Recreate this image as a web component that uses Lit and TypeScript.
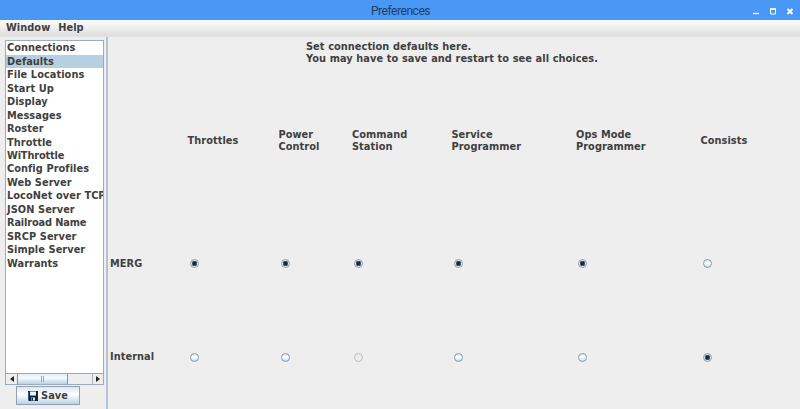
import { LitElement, html, css } from "lit";
import { customElement, property } from "lit/decorators.js";
import { classMap } from "lit/directives/class-map.js";

@customElement("radio-dot")
class RadioDot extends LitElement {
  @property() state = "off";

  static styles = css`
    :host { display: block; width: 9px; height: 9px; }
    svg { display: block; }
    .ring { fill: url(#g); stroke: #8499ad; }
    .on .ring { fill: #d3dfe7; stroke: #95a5b2; }
    .disabled .ring { fill: #eeeeee; stroke: #bcbcbc; }
    .dot { fill: #20272d; }
  `;

  render() {
    return html`<svg class=${this.state} width="9" height="9" viewBox="0 0 9 9">
      <defs>
        <linearGradient id="g" x1="0" y1="0" x2="0" y2="1">
          <stop offset="0" stop-color="#d5e3ee" />
          <stop offset=".45" stop-color="#ffffff" />
          <stop offset="1" stop-color="#c3d9ea" />
        </linearGradient>
      </defs>
      <circle class="ring" cx="4.5" cy="4.5" r="4" />
      ${this.state === "on"
        ? html`<svg viewBox="0 0 9 9"><rect class="dot" x="2.3" y="2.3" width="4.4" height="4.4" rx="1" /></svg>`
        : ""}
    </svg>`;
  }
}

const SECTIONS = [
  "Connections", "Defaults", "File Locations", "Start Up", "Display", "Messages",
  "Roster", "Throttle", "WiThrottle", "Config Profiles", "Web Server",
  "LocoNet over TCP", "JSON Server", "Railroad Name", "SRCP Server",
  "Simple Server", "Warrants",
];

const COLUMNS = [
  ["Throttles"], ["Power", "Control"], ["Command", "Station"],
  ["Service", "Programmer"], ["Ops Mode", "Programmer"], ["Consists"],
];

const ROWS = [
  { name: "MERG", states: ["on", "on", "on", "on", "on", "off"] },
  { name: "Internal", states: ["off", "off", "disabled", "off", "off", "on"] },
];

@customElement("app-root")
class AppRoot extends LitElement {
  static styles = css`
    * { box-sizing: border-box; }
    :host {
      display: flex; flex-direction: column; width: 800px; height: 409px;
      overflow: hidden; background: #eeeeee; color: #404040;
      font: bold 9.8px/12px "DejaVu Sans", sans-serif; white-space: nowrap;
      letter-spacing: 0.05px; word-spacing: 0.15px;
    }
    .title {
      flex: none; display: grid; grid-template-columns: 1fr auto 1fr; align-items: center;
      height: 20px; padding: 0 6px 0 7px; background: #4a98f5; color: #213e64;
      font: 12px/20px Roboto, sans-serif; letter-spacing: -0.45px;
    }
    .title span { grid-column: 2; padding-top: 1px; }
    .controls { justify-self: end; display: flex; }
    .controls svg { display: block; }
    .menu {
      flex: none; display: flex; gap: 8px; height: 17px; padding: 1px 6px 0;
      line-height: 14px; border-bottom: 1px solid #e2e2e2;
      background: linear-gradient(#fcfcfc, #dededc);
    }
    .body { flex: 1; display: flex; min-height: 0; }
    .side {
      flex: none; width: 108px; padding: 3px 0 0 5px; border-right: 2px solid #b5c1d6;
      display: flex; flex-direction: column;
    }
    .box {
      width: 99px; height: 345px; border: 1px solid #9fabb8; background: #fff;
      display: flex; flex-direction: column;
    }
    .list { flex: 1; overflow: hidden; padding-top: 0.4px; }
    .item { height: 13.46px; line-height: 14px; padding-left: 1px; }
    .item.tight { letter-spacing: -0.15px; }
    .item.selected { background: #b6cfe1; }
    .scroll {
      flex: none; height: 11px; display: flex; border-top: 1px solid #9aa9b7; background: #eeeeee;
    }
    .arrow { width: 11px; display: grid; place-items: center; }
    .arrow.right { margin-left: auto; border-left: 1px solid #a9b5c0; }
    .thumb {
      width: 51px; border: solid #7996b4; border-width: 0 1px; display: flex;
      align-items: center; justify-content: center; gap: 1px;
      background: linear-gradient(#e2edf6, #f8fbfd 40%, #b9d1e6);
    }
    .thumb i { width: 1px; height: 6px; background: #8fa9c2; }
    .save {
      width: 64px; height: 19px; margin: 1px 0 0 11px; border: 1px solid #8ea3b7;
      display: flex; align-items: center; justify-content: center; gap: 3px;
      background: linear-gradient(#dbe8f2, #ffffff 45%, #b9d2e5);
    }
    .main { flex: 1; padding: 3.5px 0 0 2px; }
    .intro { margin-left: 196px; height: 60px; }
    .table {
      display: grid; grid-template-columns: 77.5px 91px 73.5px 99.5px 124.5px 124.5px 90px;
      grid-template-rows: 80px 166px 21px; align-items: center;
    }
    .choice { padding-left: 2px; }
  `;

  render() {
    return html`
      <div class="title">
        <span>Preferences</span>
        <div class="controls">
          <svg width="42" height="20" viewBox="0 0 42 20" fill="none" stroke="#ffffff">
            <path d="M1 12.5h6" stroke-width="1.3" />
            <path d="M18.5 8v5h5V8" />
            <path d="M18 8h6" stroke-width="1.8" />
            <path d="M35.5 8l5 5m0-5l-5 5" stroke-width="1.8" />
          </svg>
        </div>
      </div>
      <div class="menu"><span>Window</span><span>Help</span></div>
      <div class="body">
        <div class="side">
          <div class="box">
            <div class="list">
              ${SECTIONS.map((s) => html`<div class=${classMap({ item: true, selected: s === "Defaults", tight: s === "Railroad Name" || s === "WiThrottle" })}>${s}</div>`)}
            </div>
            <div class="scroll">
              <div class="arrow"><svg width="4" height="6"><path d="M4 0v6L0 3z" fill="#222" /></svg></div>
              <div class="thumb"><i></i><i></i></div>
              <div class="arrow right"><svg width="4" height="6"><path d="M0 0v6l4-3z" fill="#222" /></svg></div>
            </div>
          </div>
          <div class="save">
            <svg width="10" height="10" viewBox="0 0 10 10">
              <path d="M0 0h10v10H1L0 9z" fill="#14243a" />
              <path d="M.5 1v8" stroke="#315b91" />
              <path d="M2 0.5h6v4H2z" fill="#eef4f9" />
              <path d="M3 6.5h4v3H3z" fill="#d9e3eb" />
              <path d="M3.5 7h1.5v2.5H3.5z" fill="#14243a" />
            </svg>
            <span>Save</span>
          </div>
        </div>
        <div class="main">
          <div class="intro">Set connection defaults here.<br />You may have to save and restart to see all choices.</div>
          <div class="table">
            <span></span>
            ${COLUMNS.map((c) => html`<div>${c.map((l) => html`<div>${l}</div>`)}</div>`)}
            ${ROWS.map((r) => html`<div>${r.name}</div>
              ${r.states.map((s) => html`<div class="choice"><radio-dot state=${s}></radio-dot></div>`)}`)}
          </div>
        </div>
      </div>
    `;
  }
}
